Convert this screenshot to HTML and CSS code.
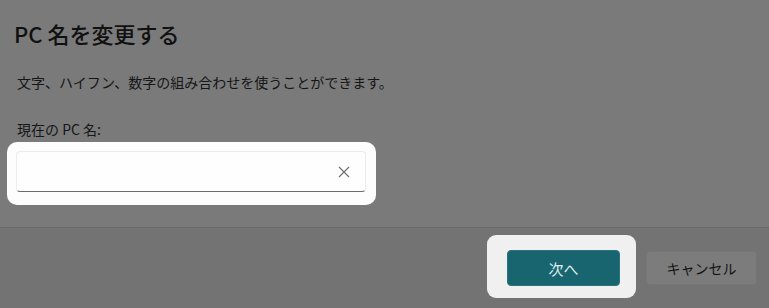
FILE: index.html
```html
<!DOCTYPE html>
<html lang="ja">
<head>
<meta charset="utf-8">
<title>PC 名を変更する</title>
<link rel="stylesheet" href="styles.css">
</head>
<body>
<div class="dialog">
  <div class="content">
    <h1 class="title">PC 名を変更する</h1>
    <p class="desc">文字、ハイフン、数字の組み合わせを使うことができます。</p>
    <p class="label">現在の PC 名:</p>
    <div class="highlight">
      <div class="input">
        <span class="value"></span>
        <svg class="clear" width="12" height="12" viewBox="0 0 12 12"><path d="M1 1 L11 11 M11 1 L1 11" stroke="#6e6e6e" stroke-width="1.1" fill="none"/></svg>
      </div>
    </div>
  </div>
  <div class="footer">
    <div class="btn-highlight">
      <button class="btn primary">次へ</button>
    </div>
    <button class="btn secondary">キャンセル</button>
  </div>
</div>
</body>
</html>
```

FILE: styles.css
```css
html, body {
  margin: 0;
  padding: 0;
}
body {
  width: 769px;
  height: 308px;
  background: #7a7a7a;
  font-family: "Noto Sans CJK JP", "Noto Sans", sans-serif;
  color: #161616;
  overflow: hidden;
}
.dialog {
  display: flex;
  flex-direction: column;
  height: 308px;
}
.content {
  padding: 18px 0 0 14px;
  height: 227px;
  flex: none;
  box-sizing: border-box;
}
.title {
  margin: 0;
  font-size: 22px;
  line-height: 30px;
  font-weight: 500;
  color: #111;
}
.desc {
  margin: 24px 0 0 3px;
  font-size: 14px;
  line-height: 20px;
}
.label {
  margin: 27px 0 0 3px;
  font-size: 14px;
  line-height: 20px;
}
.highlight {
  margin: 3px 0 0 -7px;
  width: 369px;
  height: 63px;
  box-sizing: border-box;
  background: #fdfdfd;
  border-radius: 10px;
  padding: 9px 10px 12px 9px;
}
.input {
  height: 41px;
  box-sizing: border-box;
  border: 1px solid #ececec;
  border-bottom: 1px solid #6a6a6a;
  border-radius: 4px;
  background: #fefefe;
  display: flex;
  align-items: center;
  justify-content: space-between;
  padding: 0 15px 0 10px;
}
.clear {
  display: block;
}
.footer {
  flex: 1;
  background: #737373;
  border-top: 1px solid #6c6c6c;
  display: flex;
  justify-content: flex-end;
  align-items: flex-start;
  padding: 7px 12px 0 0;
  gap: 10px;
}
.btn-highlight {
  width: 149px;
  height: 63px;
  box-sizing: border-box;
  background: #f0f0f0;
  border-radius: 9px;
  padding: 15px 16px 0 20px;
}
.btn {
  font-family: "Noto Sans CJK JP", "Noto Sans", sans-serif;
  font-size: 14px;
  border-radius: 4px;
  cursor: pointer;
}
.primary {
  width: 113px;
  height: 36px;
  background: #186570;
  border: 1px solid #2a7480;
  color: #dfeced;
  font-size: 15px;
}
.secondary {
  margin-top: 16px;
  width: 111px;
  height: 34px;
  background: #7c7c7c;
  border: 1px solid #767676;
  color: #141414;
}
```
